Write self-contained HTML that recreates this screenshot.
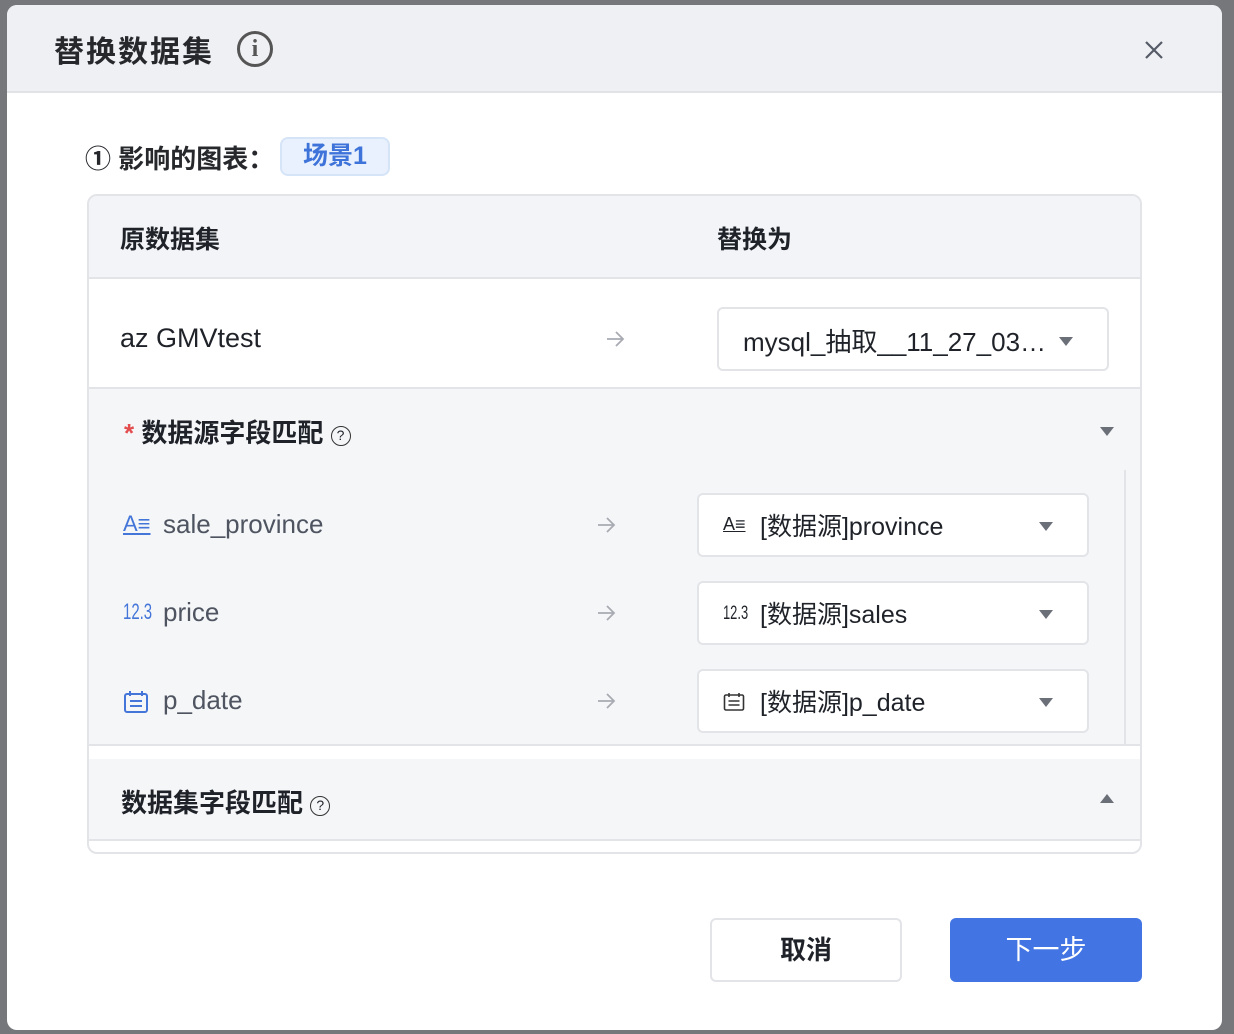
<!DOCTYPE html>
<html><head><meta charset="utf-8"><style>
*{box-sizing:border-box;margin:0;padding:0}
body{width:1234px;height:1034px;background:#76777b;font-family:"Liberation Sans","Noto Sans CJK SC",sans-serif;position:relative;overflow:hidden;color:#1f2329}
.abs{position:absolute}
.modal{left:7px;top:5px;width:1215px;height:1025px;background:#fff;border-radius:10px;overflow:hidden}
.hdr{left:0;top:0;width:1215px;height:88px;background:#eff0f4;border-bottom:2px solid #e2e3e7}
.t{white-space:nowrap}
.sel{background:#fff;border:2px solid #e3e4e8;border-radius:6px}
.tri{width:0;height:0;border-left:7px solid transparent;border-right:7px solid transparent;border-top:9px solid #6b6f78}
.fld{font-size:26px;color:#4e5460}
.q{display:inline-block;width:20px;height:20px;border:1.6px solid #333;border-radius:50%;font-size:14px;line-height:17px;text-align:center;font-weight:normal;vertical-align:2px}
</style></head><body>
<svg width="0" height="0" style="position:absolute"><defs><g id="ar"><path d="M1 9h16M10 2l7 7-7 7" fill="none" stroke="#a8abb2" stroke-width="1.8"/></g></defs></svg>
<div class="abs modal">
 <div class="abs hdr"></div>
 <div class="abs t" style="left:47px;top:22px;font-size:30px;font-weight:bold;color:#26282c;letter-spacing:2px">替换数据集</div>
 <div class="abs" style="left:230px;top:26px;width:36px;height:36px;border:3px solid #555;border-radius:50%;text-align:center;font-family:'Liberation Serif',serif;font-weight:bold;font-size:24px;line-height:30px;color:#555">i</div>
 <svg class="abs" style="left:1137px;top:35px" width="20" height="20" viewBox="0 0 20 20"><path d="M2 2l16 16M18 2L2 18" stroke="#555b66" stroke-width="2.2"/></svg>
 <div class="abs t" style="left:78px;top:134px;font-size:26px;font-weight:bold;color:#26282c">① 影响的图表：</div>
 <div class="abs t" style="left:273px;top:132px;width:110px;height:39px;background:#e8f1fd;border:2px solid #d6e4f8;border-radius:8px;color:#3e73d9;font-size:25px;font-weight:bold;text-align:center;line-height:35px">场景1</div>
 <div class="abs" style="left:80px;top:189px;width:1055px;height:660px;border:2px solid #e3e4e8;border-radius:10px;overflow:hidden;background:#fff">
  <div class="abs" style="left:0;top:0;width:1055px;height:83px;background:#f3f4f7;border-bottom:2px solid #e3e4e8"></div>
  <div class="abs t" style="left:31px;top:24px;font-size:25px;font-weight:bold">原数据集</div>
  <div class="abs t" style="left:628px;top:24px;font-size:25px;font-weight:bold">替换为</div>
  <div class="abs t" style="left:31px;top:127px;font-size:27px">az GMVtest</div>
  <svg class="abs" style="left:517px;top:134px" width="20" height="18"><use href="#ar"/></svg>
  <div class="abs sel" style="left:628px;top:111px;width:392px;height:64px"></div>
  <div class="abs t" style="left:654px;top:126px;font-size:26px">mysql_抽取__11_27_03…</div>
  <div class="abs tri" style="left:970px;top:141px"></div>
  <div class="abs" style="left:0;top:191px;width:1055px;height:359px;background:#f5f6f8;border-top:2px solid #e3e4e8;border-bottom:2px solid #e3e4e8"></div>
  <div class="abs t" style="left:35px;top:217px;font-size:26px;font-weight:bold"><span style="color:#e34d4d">*</span> 数据源字段匹配 <span class="q">?</span></div>
  <div class="abs tri" style="left:1011px;top:231px"></div>
  <div class="abs" style="left:1035px;top:274px;width:2px;height:276px;background:#e3e4e8"></div>
  <div class="abs t" style="left:34px;top:315px;font-size:22px;color:#4476d9;text-decoration:underline">A≡</div>
  <div class="abs t fld" style="left:74px;top:313px">sale_province</div>
  <div class="abs t" style="left:34px;top:403px;font-size:22px;color:#4476d9;transform:scaleX(.68);transform-origin:left">12.3</div>
  <div class="abs t fld" style="left:74px;top:401px">price</div>
  <svg class="abs" style="left:34px;top:494px" width="26" height="24" viewBox="0 0 26 24"><rect x="2" y="4" width="22" height="18" rx="2" fill="none" stroke="#4476d9" stroke-width="2"/><path d="M7 1v5M19 1v5M7 11h12M7 16h12" stroke="#4476d9" stroke-width="2"/></svg>
  <div class="abs t fld" style="left:74px;top:489px">p_date</div>
  <svg class="abs" style="left:508px;top:320px" width="20" height="18"><use href="#ar"/></svg>
  <svg class="abs" style="left:508px;top:408px" width="20" height="18"><use href="#ar"/></svg>
  <svg class="abs" style="left:508px;top:496px" width="20" height="18"><use href="#ar"/></svg>
  <div class="abs sel" style="left:608px;top:297px;width:392px;height:64px"></div>
  <div class="abs sel" style="left:608px;top:385px;width:392px;height:64px"></div>
  <div class="abs sel" style="left:608px;top:473px;width:392px;height:64px"></div>
  <div class="abs t" style="left:634px;top:318px;font-size:18px;text-decoration:underline">A≡</div>
  <div class="abs t" style="left:634px;top:407px;font-size:19px;transform:scaleX(.68);transform-origin:left">12.3</div>
  <svg class="abs" style="left:634px;top:496px" width="22" height="20" viewBox="0 0 22 20"><rect x="1.5" y="3" width="19" height="15" rx="1.5" fill="none" stroke="#333" stroke-width="1.6"/><path d="M6 1v4M16 1v4M5.5 9h11M5.5 13h11" stroke="#333" stroke-width="1.6"/></svg>
  <div class="abs t" style="left:671px;top:311px;font-size:25px">[数据源]province</div>
  <div class="abs t" style="left:671px;top:399px;font-size:25px">[数据源]sales</div>
  <div class="abs t" style="left:671px;top:487px;font-size:25px">[数据源]p_date</div>
  <div class="abs tri" style="left:950px;top:326px"></div>
  <div class="abs tri" style="left:950px;top:414px"></div>
  <div class="abs tri" style="left:950px;top:502px"></div>
  <div class="abs" style="left:0;top:563px;width:1055px;height:82px;background:#f5f6f8;border-bottom:2px solid #e3e4e8"></div>
  <div class="abs t" style="left:32px;top:587px;font-size:26px;font-weight:bold">数据集字段匹配 <span class="q">?</span></div>
  <div class="abs" style="left:1011px;top:598px;width:0;height:0;border-left:7px solid transparent;border-right:7px solid transparent;border-bottom:9px solid #6b6f78"></div>
 </div>
 <div class="abs" style="left:703px;top:913px;width:192px;height:64px;border:2px solid #e3e4e8;border-radius:6px;background:#fff;text-align:center;line-height:60px;font-size:26px;font-weight:bold">取消</div>
 <div class="abs" style="left:943px;top:913px;width:192px;height:64px;border-radius:6px;background:#4274e4;text-align:center;line-height:64px;font-size:27px;color:#fff">下一步</div>
</div>
</body></html>
